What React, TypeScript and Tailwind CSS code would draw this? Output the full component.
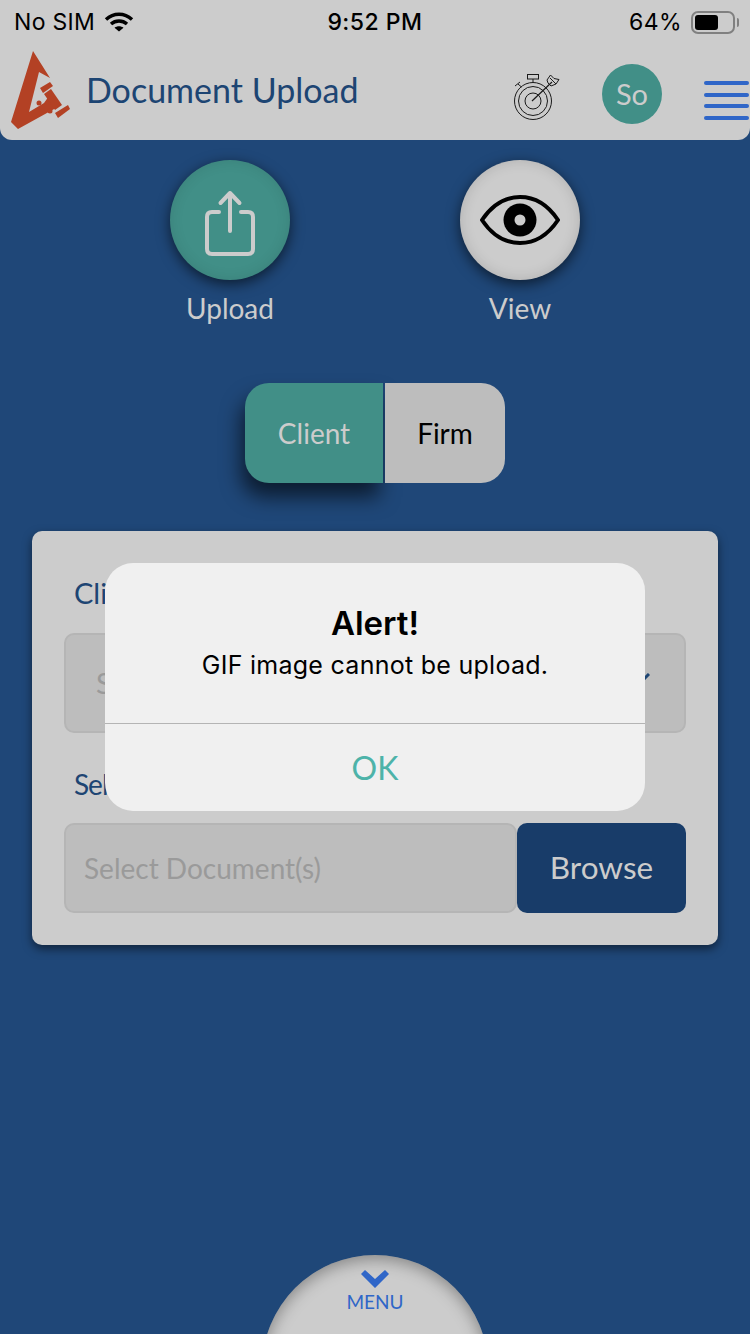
import React from "react";

const gill = { fontFamily: '"Lato", "Noto Sans", sans-serif' };
const sys = { fontFamily: 'Inter, "Liberation Sans", sans-serif' };

function Logo() {
  return (
    <svg width="62" height="82" viewBox="10 50 62 82" className="shrink-0 mb-[2px]">
      <g fill="#b34124">
        <path d="M33 51 L50 78 L39 72 L29 112 L44 103 L49 96 L56 108 L18 129 L11 122 Z" />
        <path d="M40 88 L50 82 L53 86 L43 93 Z" />
        <path d="M44 94 L51 89 L62 105 L55 110 Z" />
        <path d="M55 113 L68 105 L70 109 L58 118 Z" />
        <circle cx="39" cy="103" r="2.5" />
        <circle cx="50" cy="111" r="2.5" />
      </g>
    </svg>
  );
}

function TargetIcon() {
  return (
    <svg width="46" height="46" viewBox="0 0 46 46" fill="none" stroke="#1a1a1a" strokeWidth="1" className="shrink-0 mt-[10px]">
      <circle cx="19" cy="27" r="18.5" />
      <circle cx="19" cy="27" r="14.5" />
      <circle cx="19" cy="27" r="8" />
      <rect x="13.5" y="0.5" width="11" height="4.5" />
      <path d="M19 5 V8.5" />
      <path d="M1 12 L6 8 M4 10 L7.5 13" />
      <path d="M18 27 L38 8" strokeWidth="1.2" />
      <path d="M34 9 L33 6 L36.5 1 L40 4.5 L45 5.5 L42 10 L37 12 Z" />
      <path d="M36 4 L42 10" />
    </svg>
  );
}

export default function App() {
  return (
    <div className="relative w-[750px] h-[1334px] overflow-hidden bg-[#1f4778] flex flex-col items-center" style={gill}>
      {/* header */}
      <header className="w-full h-[140px] bg-[#cccccc] rounded-b-[12px] shrink-0 flex flex-col">
        <div className="h-[44px] flex items-center px-[14px] text-black text-[23px] relative" style={sys}>
          <span className="tracking-[0.3px]">No SIM</span>
          <svg width="30" height="22" viewBox="0 0 30 22" className="ml-[9px]" fill="none" stroke="#000" strokeWidth="3.4">
            <path d="M2 8.5 C9.5 1.5 20.5 1.5 28 8.5" />
            <path d="M7 13 C11.5 9 18.5 9 23 13" />
            <path d="M15 20.5 L10.5 16.8 C13 14.8 17 14.8 19.5 16.8 Z" fill="#000" stroke="none" />
          </svg>
          <span className="absolute left-0 right-0 text-center font-medium tracking-[0.5px]">9:52 PM</span>
          <span className="ml-auto tracking-[0.4px]">64%</span>
          <div className="ml-[9px] w-[44px] h-[23px] rounded-[7px] border-2 border-[#808080] p-[2px] relative">
            <div className="h-full w-[23px] bg-black rounded-[3px]" />
            <div className="absolute right-[-6px] top-[5px] w-[2px] h-[9px] bg-[#808080] rounded-r-full" />
          </div>
          <div className="w-px" />
        </div>
        <div className="flex-1 flex items-center pl-[10px]">
          <Logo />
          <div className="ml-[14px] text-[34px] text-[#1d4573] mb-[6px]">Document Upload</div>
          <div className="ml-auto flex items-center mr-px">
            <TargetIcon />
            <div className="ml-[42px] mt-[4px] w-[60px] h-[60px] rounded-full bg-[#418f87] text-[#cccccc] text-[29px] flex items-center justify-center">So</div>
            <div className="ml-[42px] mt-[17px] w-[45px] flex flex-col gap-[7.7px]">
              <div className="h-[4px] bg-[#2f66c8] rounded-full" />
              <div className="h-[4px] bg-[#2f66c8] rounded-full" />
              <div className="h-[4px] bg-[#2f66c8] rounded-full" />
              <div className="h-[4px] bg-[#2f66c8] rounded-full" />
            </div>
          </div>
        </div>
      </header>

      {/* upload / view */}
      <div className="mt-[20px] flex gap-[170px]">
        <div className="flex flex-col items-center w-[120px]">
          <div className="w-[120px] h-[120px] rounded-full bg-[#418f87] shadow-[0_4px_14px_rgba(0,0,0,0.6),inset_0_0_14px_rgba(0,0,0,0.1)] flex items-center justify-center">
            <svg width="56" height="68" viewBox="0 0 56 68" fill="none" stroke="#cccccc" strokeWidth="4" strokeLinecap="round" strokeLinejoin="round" className="mt-[6px]">
              <path d="M17 23 H10 Q5 23 5 28 V60 Q5 65 10 65 H46 Q51 65 51 60 V28 Q51 23 46 23 H39" />
              <path d="M28 42 V4 M18.5 14 L28 4 L37.5 14" />
            </svg>
          </div>
          <div className="mt-[10px] text-[28px] text-[#cccccc] leading-[36px]">Upload</div>
        </div>
        <div className="flex flex-col items-center w-[120px]">
          <div className="w-[120px] h-[120px] rounded-full bg-[#cccccc] shadow-[0_4px_14px_rgba(0,0,0,0.6),inset_0_0_14px_rgba(0,0,0,0.14)] flex items-center justify-center">
            <svg width="80" height="50" viewBox="0 0 80 50" fill="none">
              <path d="M2 25 C12 10 25 2 40 2 C55 2 68 10 78 25 C68 40 55 48 40 48 C25 48 12 40 2 25 Z" stroke="#000" strokeWidth="4" />
              <circle cx="40" cy="25" r="16.5" fill="#000" />
              <circle cx="40" cy="25" r="5.5" fill="#cccccc" />
            </svg>
          </div>
          <div className="mt-[10px] text-[28px] text-[#cccccc] leading-[36px]">View</div>
        </div>
      </div>

      {/* segmented */}
      <div className="mt-[57px] flex h-[100px] w-[260px]">
        <div className="w-[138px] rounded-l-[24px] bg-[#418f87] text-[#cccccc] text-[28px] flex items-center justify-center shadow-[-4px_14px_20px_rgba(0,0,0,0.6)]">Client</div>
        <div className="ml-[2px] w-[120px] rounded-r-[24px] bg-[#bdbdbd] text-black text-[28px] flex items-center justify-center">Firm</div>
      </div>

      {/* card */}
      <div className="mt-[48px] w-[686px] h-[414px] rounded-[10px] bg-[#cccccc] shadow-[0_4px_10px_rgba(0,0,0,0.5)] px-[32px] pt-[44px] flex flex-col">
        <div className="text-[29px] text-[#1d4573] leading-[36px] h-[36px] pl-[10px]">Client</div>
        <div className="mt-[22px] h-[100px] rounded-[10px] bg-[#bdbdbd] border-2 border-[#b5b5b5] flex items-center justify-between pl-[30px] pr-[34px] text-[29px] text-[#9a9a9a]">
          <span>Select</span>
          <svg width="16" height="10" viewBox="0 0 16 10" fill="none" stroke="#1d4573" strokeWidth="3" className="mb-[10px]">
            <path d="M1 1 L8 8 L15 1" />
          </svg>
        </div>
        <div className="mt-[33px] text-[28px] text-[#1d4573] leading-[36px] h-[36px] pl-[10px] tracking-[-1px]">Select</div>
        <div className="mt-[21px] flex h-[90px]">
          <div className="w-[453px] rounded-[10px] bg-[#bdbdbd] border-2 border-[#b5b5b5] flex items-center pl-[18px] text-[28px] text-[#9a9a9a]">Select Document(s)</div>
          <div className="flex-1 rounded-[10px] bg-[#183c69] text-[#cccccc] text-[31.5px] flex items-center justify-center">Browse</div>
        </div>
      </div>

      {/* alert */}
      <div className="absolute left-[105px] top-[563px] w-[540px] h-[248px] rounded-[28px] bg-[#f0f0f0] flex flex-col" style={sys}>
        <div className="h-[160px] flex flex-col items-center pt-[38px]">
          <div className="text-[33px] leading-[44px] font-semibold text-black">Alert!</div>
          <div className="text-[25px] leading-[34px] mt-[3px] text-black tracking-[0.27px]">GIF image cannot be upload.</div>
        </div>
        <div className="h-px bg-[#b4b4b4]" />
        <div className="flex-1 flex items-center justify-center text-[32px] text-[#4db3a9]" style={gill}>OK</div>
      </div>

      {/* menu */}
      <div className="absolute left-[262px] top-[1255px] w-[226px] h-[226px] rounded-full bg-[#cccccc] shadow-[inset_0_4px_16px_rgba(0,0,0,0.35)] flex flex-col items-center pt-[15px]">
        <svg width="28" height="18" viewBox="0 0 28 18">
          <path d="M0 4 L4 0 L14 9 L24 0 L28 4 L14 18 Z" fill="#2f66c8" />
        </svg>
        <div className="mt-[3px] text-[19px] leading-[22px] text-[#2f66c8]">MENU</div>
      </div>
    </div>
  );
}
